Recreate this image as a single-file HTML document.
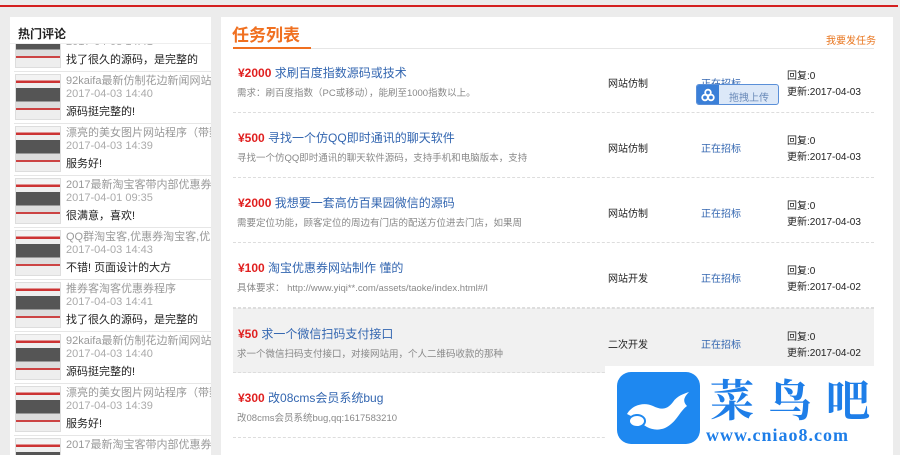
<!DOCTYPE html>
<html><head><meta charset="utf-8"><style>
*{margin:0;padding:0;box-sizing:border-box}
html,body{width:900px;height:455px;overflow:hidden}
body{background:#ececec;font-family:"Liberation Sans","Noto Sans CJK SC",sans-serif;position:relative}
.abs{position:absolute;white-space:nowrap}
.red{position:absolute;left:0;top:5px;width:898px;height:2px;background:#d42020}
.lp{position:absolute;left:10px;top:17px;width:201px;height:438px;background:#fff;overflow:hidden}
.rp{position:absolute;left:221px;top:17px;width:672px;height:438px;background:#fff;overflow:hidden}
.it{position:absolute;left:4px;width:197px;height:52px;border-bottom:1px solid #e6e6e6}
.th{position:absolute;left:1px;top:2px;width:46px;height:46px;border:1px solid #ddd;background:linear-gradient(#f3f3f3 0 12%,#c33 12% 18%,#eee 18% 30%,#555 30% 60%,#ddd 60% 75%,#c44 75% 80%,#eee 80%)}
.it div{white-space:nowrap}
.it .t{position:absolute;left:52px;top:0;font-size:11px;color:#999;width:145px;overflow:hidden}
.it .d{position:absolute;left:52px;top:16px;font-size:11px;color:#aaa}
.it .c{position:absolute;left:52px;top:31px;font-size:11px;color:#222}
.row{position:absolute;left:12px;width:641px;height:65px;border-bottom:1px dashed #ddd}
.row div{white-space:nowrap}
.row .ti{position:absolute;left:5px;top:16px;font-size:12px;color:#3366b0}
.row .ti b{color:#e02020;font-weight:bold}
.row .de{position:absolute;left:4px;top:37px;font-size:9.5px;color:#888}
.row .ty{position:absolute;left:375px;top:27px;font-size:10px;color:#222}
.row .st{position:absolute;left:468px;top:27px;font-size:10px;color:#3366b0}
.row .rp1{position:absolute;left:554px;top:19px;font-size:10px;color:#222}
.row .rp2{position:absolute;left:554px;top:35px;font-size:10px;color:#222}
</style></head><body>
<div class="red"></div>
<div class="lp">
 <div class="it" style="top:3px"><div class="th"></div><div class="t"></div><div class="d">2017-04-03 14:41</div><div class="c">找了很久的源码，是完整的</div></div>
 <div class="it" style="top:55px"><div class="th"></div><div class="t">92kaifa最新仿制花边新闻网站模板,</div><div class="d">2017-04-03 14:40</div><div class="c">源码挺完整的!</div></div>
 <div class="it" style="top:107px"><div class="th"></div><div class="t">漂亮的美女图片网站程序（带数据,</div><div class="d">2017-04-03 14:39</div><div class="c">服务好!</div></div>
 <div class="it" style="top:159px"><div class="th"></div><div class="t">2017最新淘宝客带内部优惠券系统-</div><div class="d">2017-04-01 09:35</div><div class="c">很满意，喜欢!</div></div>
 <div class="it" style="top:211px"><div class="th"></div><div class="t">QQ群淘宝客,优惠券淘宝客,优惠券</div><div class="d">2017-04-03 14:43</div><div class="c">不错! 页面设计的大方</div></div>
 <div class="it" style="top:263px"><div class="th"></div><div class="t">推券客淘客优惠券程序</div><div class="d">2017-04-03 14:41</div><div class="c">找了很久的源码，是完整的</div></div>
 <div class="it" style="top:315px"><div class="th"></div><div class="t">92kaifa最新仿制花边新闻网站模板,</div><div class="d">2017-04-03 14:40</div><div class="c">源码挺完整的!</div></div>
 <div class="it" style="top:367px"><div class="th"></div><div class="t">漂亮的美女图片网站程序（带数据,</div><div class="d">2017-04-03 14:39</div><div class="c">服务好!</div></div>
 <div class="it" style="top:419px"><div class="th"></div><div class="t">2017最新淘宝客带内部优惠券系统-</div></div>
 <div style="position:absolute;left:0;top:0;width:201px;height:27px;background:#fff;border-bottom:1px solid #eee"></div>
 <div class="abs" style="left:8px;top:8px;font-size:12px;font-weight:bold;color:#222">热门评论</div>
</div>
<div class="rp">
 <div class="abs" style="left:11px;top:4px;font-size:17px;font-weight:bold;color:#f07020">任务列表</div>
 <div class="abs" style="left:605px;top:15px;font-size:10px;color:#e8741c">我要发任务</div>
 <div style="position:absolute;left:12px;top:31px;width:641px;height:1px;background:#e6e6e6"></div>
 <div style="position:absolute;left:12px;top:30px;width:78px;height:2px;background:#f07020"></div>
 <div class="row" style="top:31px"><div class="ti"><b>¥2000</b> 求刷百度指数源码或技术</div><div class="de">需求：刷百度指数（PC或移动），能刷至1000指数以上。</div><div class="ty">网站仿制</div><div class="st">正在招标</div><div class="rp1">回复:0</div><div class="rp2">更新:2017-04-03</div></div>
 <div class="row" style="top:96px"><div class="ti"><b>¥500</b> 寻找一个仿QQ即时通讯的聊天软件</div><div class="de">寻找一个仿QQ即时通讯的聊天软件源码，支持手机和电脑版本，支持</div><div class="ty">网站仿制</div><div class="st">正在招标</div><div class="rp1">回复:0</div><div class="rp2">更新:2017-04-03</div></div>
 <div class="row" style="top:161px"><div class="ti"><b>¥2000</b> 我想要一套高仿百果园微信的源码</div><div class="de">需要定位功能，顾客定位的周边有门店的配送方位进去门店，如果周</div><div class="ty">网站仿制</div><div class="st">正在招标</div><div class="rp1">回复:0</div><div class="rp2">更新:2017-04-03</div></div>
 <div class="row" style="top:226px"><div class="ti"><b>¥100</b> 淘宝优惠券网站制作 懂的</div><div class="de">具体要求： http://www.yiqi**.com/assets/taoke/index.html#/l</div><div class="ty">网站开发</div><div class="st">正在招标</div><div class="rp1">回复:0</div><div class="rp2">更新:2017-04-02</div></div>
 <div class="row" style="top:291px;background:#f1f1f1;border-top:1px dashed #ddd"><div class="ti"><b>¥50</b> 求一个微信扫码支付接口</div><div class="de">求一个微信扫码支付接口，对接网站用，个人二维码收款的那种</div><div class="ty">二次开发</div><div class="st">正在招标</div><div class="rp1">回复:0</div><div class="rp2">更新:2017-04-02</div></div>
 <div class="row" style="top:356px"><div class="ti"><b>¥300</b> 改08cms会员系统bug</div><div class="de">改08cms会员系统bug,qq:1617583210</div></div>
</div>
<div style="position:absolute;left:696px;top:84px;width:83px;height:21px;border:1px solid #5a8fd8;border-radius:3px;background:#dce8f8;overflow:hidden">
 <div style="position:absolute;left:0;top:0;width:22px;height:21px;background:#3a7fd8"></div>
 <svg style="position:absolute;left:4px;top:3px" width="14" height="14" viewBox="0 0 14 14"><circle cx="7" cy="4.5" r="2.8" fill="none" stroke="#fff" stroke-width="1.8"/><circle cx="4" cy="9.5" r="2.8" fill="none" stroke="#fff" stroke-width="1.8"/><circle cx="10" cy="9.5" r="2.8" fill="none" stroke="#fff" stroke-width="1.8"/></svg>
 <div class="abs" style="left:32px;top:4px;font-size:10px;color:#6a8ab8">拖拽上传</div>
</div>
<div style="position:absolute;left:605px;top:366px;width:288px;height:87px;background:#fff"></div>
<div style="position:absolute;left:617px;top:372px;width:83px;height:72px;border-radius:14px;background:#1e88f0"></div>
<svg style="position:absolute;left:617px;top:372px" width="83" height="72" viewBox="0 0 83 72"><path d="M10 42 C16 32 28 30 36 34 C44 38 50 38 56 30 C60 24 66 22 72 20 C66 26 66 30 70 34 C62 40 60 50 48 56 C38 60 28 56 22 48 Z" fill="#fff"/><ellipse cx="20" cy="49" rx="8" ry="6" fill="#fff" stroke="#1e88f0" stroke-width="2"/></svg>
<div class="abs" style="left:710px;top:370px;font-size:44px;font-weight:bold;color:#1e7ee8;font-family:'Noto Serif CJK SC','Noto Sans CJK SC',serif;letter-spacing:14px;line-height:54px">菜鸟吧</div>
<div class="abs" style="left:706px;top:425px;font-size:18px;font-weight:bold;color:#1e7ee8;font-family:'Liberation Serif',serif;letter-spacing:1px">www.cniao8.com</div>
</body></html>
